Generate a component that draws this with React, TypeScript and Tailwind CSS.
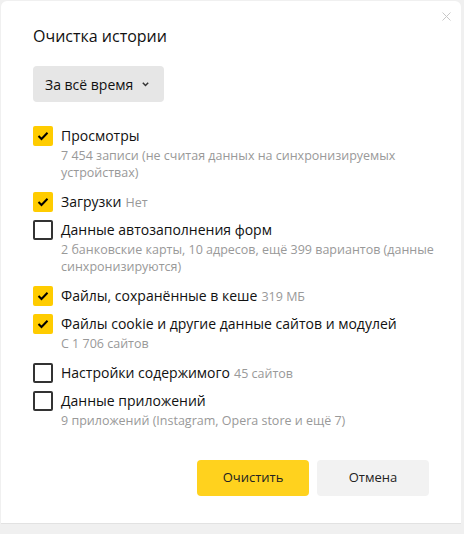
import React from "react";

type Item = { label: string; extra?: string; sub?: string[]; checked: boolean };

const items: Item[] = [
  { label: "Просмотры", sub: ["7 454 записи (не считая данных на синхронизируемых", "устройствах)"], checked: true },
  { label: "Загрузки", extra: "Нет", checked: true },
  { label: "Данные автозаполнения форм", sub: ["2 банковские карты, 10 адресов, ещё 399 вариантов (данные", "синхронизируются)"], checked: false },
  { label: "Файлы, сохранённые в кеше", extra: "319 МБ", checked: true },
  { label: "Файлы cookie и другие данные сайтов и модулей", sub: ["С 1 706 сайтов"], checked: true },
  { label: "Настройки содержимого", extra: "45 сайтов", checked: false },
  { label: "Данные приложений", sub: ["9 приложений (Instagram, Opera store и ещё 7)"], checked: false },
];

function Box({ checked }: { checked: boolean }) {
  if (checked) {
    return (
      <div className="w-5 h-5 shrink-0 rounded-[2px] bg-[#ffcc00] flex items-center justify-center">
        <svg width="12" height="10" viewBox="0 0 12 10">
          <path d="M1.5 5 L4.5 8 L10.5 1.8" fill="none" stroke="#000" strokeWidth="2" />
        </svg>
      </div>
    );
  }
  return <div className="w-5 h-5 shrink-0 rounded-[2px] border-2 border-[#333]" />;
}

export default function App() {
  return (
    <div
      className="w-[464px] h-[534px] bg-[#f0f0f0] overflow-hidden relative"
      style={{ fontFamily: '"Open Sans", "Noto Sans", sans-serif' }}
    >
      <div className="ml-px mt-px w-[460px] h-[523px] bg-white rounded-t-md border-b border-[#e2e2e2] relative px-8 pt-[23px]">
        <svg className="absolute right-[10px] top-[11px]" width="9" height="9" viewBox="0 0 9 9">
          <path d="M0.5 0.5 L8.5 8.5 M8.5 0.5 L0.5 8.5" stroke="#c8c8c8" strokeWidth="1" />
        </svg>
        <div className="text-[16px] leading-[24px] text-[#111]">Очистка истории</div>
        <div className="mt-[18px] w-[131px] h-9 rounded bg-[#e6e6e6] flex items-center pl-3 gap-[9px] text-[14px] text-[#111]">
          <span>За всё время</span>
          <svg width="7" height="5" viewBox="0 0 7 5">
            <path d="M0.8 0.8 L3.5 3.5 L6.2 0.8" fill="none" stroke="#333" strokeWidth="1.5" />
          </svg>
        </div>
        <div className="mt-6 flex flex-col gap-2">
          {items.map((it) => (
            <div key={it.label} className="flex gap-2">
              <Box checked={it.checked} />
              <div>
                <div className="h-5 flex items-baseline gap-1 text-[14px] leading-5 text-[#111] whitespace-nowrap">
                  <span>{it.label}</span>
                  {it.extra && <span className="text-[12.5px] leading-5 text-[#999]">{it.extra}</span>}
                </div>
                {it.sub && (
                  <div className="mt-px mb-[3px] text-[12.5px] leading-[17px] text-[#999]">
                    {it.sub.map((s) => (
                      <div key={s} className="whitespace-nowrap">{s}</div>
                    ))}
                  </div>
                )}
              </div>
            </div>
          ))}
        </div>
        <div className="mt-[28px] flex justify-end gap-2">
          <button className="w-[112px] h-9 rounded bg-[#ffd21e] text-[13px] text-[#222]">Очистить</button>
          <button className="w-[112px] h-9 rounded bg-[#f2f2f2] text-[13px] text-[#222]">Отмена</button>
        </div>
      </div>
    </div>
  );
}
